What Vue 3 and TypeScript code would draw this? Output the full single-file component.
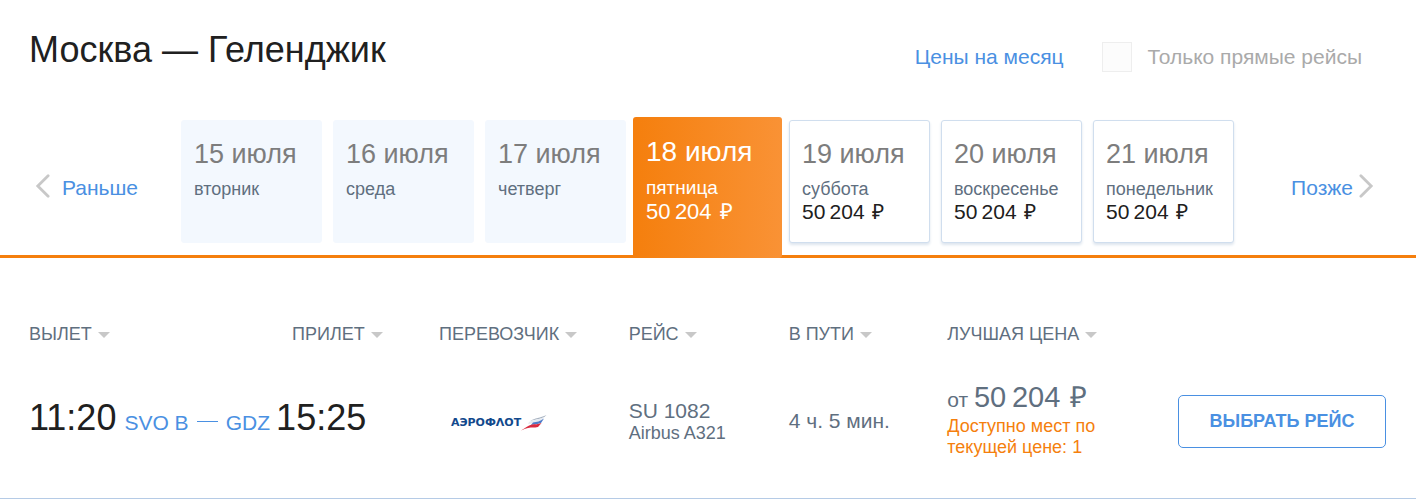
<script setup lang="ts">
import { ref } from 'vue'

interface Day {
  date: string
  weekday: string
  price?: string
}

const days: Day[] = [
  { date: '15 июля', weekday: 'вторник' },
  { date: '16 июля', weekday: 'среда' },
  { date: '17 июля', weekday: 'четверг' },
  { date: '18 июля', weekday: 'пятница', price: '50\u2009204' },
  { date: '19 июля', weekday: 'суббота', price: '50\u2009204' },
  { date: '20 июля', weekday: 'воскресенье', price: '50\u2009204' },
  { date: '21 июля', weekday: 'понедельник', price: '50\u2009204' },
]

const columns = [
  { key: 'departure', title: 'Вылет' },
  { key: 'arrival', title: 'Прилет' },
  { key: 'carrier', title: 'Перевозчик' },
  { key: 'flight', title: 'Рейс' },
  { key: 'duration', title: 'В пути' },
  { key: 'price', title: 'Лучшая цена' },
]

const selected = ref(3)
const directOnly = ref(false)
</script>

<template>
  <main class="page">
    <header class="header">
      <h1 class="title">Москва — Геленджик</h1>
      <div class="options">
        <a class="link" href="#month">Цены на месяц</a>
        <label class="direct" for="direct">
          <input id="direct" v-model="directOnly" type="checkbox" class="box" />
          Только прямые рейсы
        </label>
      </div>
    </header>

    <nav class="dates">
      <button type="button" class="step">
        <svg class="chevron" viewBox="0 0 16 26" aria-hidden="true"><path d="M14 2 3 13l11 11" /></svg>
        Раньше
      </button>
      <div class="strip">
        <button
          v-for="(day, i) in days"
          :key="day.date"
          type="button"
          class="day"
          :class="{ empty: !day.price, active: i === selected }"
          @click="selected = i"
        >
          <span class="date">{{ day.date }}</span>
          <span class="weekday">{{ day.weekday }}</span>
          <span v-if="day.price" class="day-price">{{ day.price }} <span class="rub">₽</span></span>
        </button>
      </div>
      <button type="button" class="step next">
        Позже
        <svg class="chevron" viewBox="0 0 16 26" aria-hidden="true"><path d="m2 2 11 11L2 24" /></svg>
      </button>
    </nav>

    <table class="flights">
      <thead>
        <tr>
          <th v-for="c in columns" :key="c.key" scope="col" :class="c.key">
            <button type="button" class="sort">{{ c.title }}<i class="caret"></i></button>
          </th>
          <td class="action"></td>
        </tr>
      </thead>
      <tbody>
        <tr>
          <td>
            <div class="route">
              <span class="time">11:20</span>
              <a class="airport" href="#svo">SVO B</a>
              <i class="dash"></i>
              <a class="airport" href="#gdz">GDZ</a>
            </div>
          </td>
          <td><div class="route"><span class="time">15:25</span></div></td>
          <td>
            <div class="airline">
              <span>АЭРОФΛОТ</span>
              <svg class="flag" viewBox="0 0 26 16" aria-hidden="true">
                <path fill="#a9b4c2" d="M9 6C14 3 19 3 25.500 0 23 3 19 4 15 4.500 13 5 11 5.500 9 6Z" />
                <path fill="#e6ebf2" d="M8 7c4-2 9-2 15-5l-2 4C16 8 11 8 7 9Z" />
                <path fill="#4d7bc8" d="M12 7.500c4-.5 7-1 11-4l-3 4.500c-4 1.500-6 1-10 2Z" />
                <path fill="#d92b3f" d="M0 15.500C4 13 7 10.500 11 9.500c3-.5 6 0 9.500-1.500L17 12c-4 1-6 0-10 1-3 .5-4 1.500-7 2.500Z" />
              </svg>
            </div>
          </td>
          <td>
            <div class="number">SU 1082</div>
            <div class="plane">Airbus A321</div>
          </td>
          <td class="duration-value">4 ч. 5 мин.</td>
          <td>
            <div class="best">от <span class="amount">50&#8201;204 <span class="rub">₽</span></span></div>
            <div class="seats">Доступно мест по текущей цене: 1</div>
          </td>
          <td class="action"><button type="button" class="choose">Выбрать рейс</button></td>
        </tr>
      </tbody>
    </table>
  </main>
</template>

<style>
body {
  margin: 0;
  background: #fff;
}
</style>

<style scoped>
.page {
  font-family: "Liberation Sans", Arial, sans-serif;
  color: #5f6f7f;
}
button {
  font: inherit;
  color: inherit;
  background: none;
  border: 0;
  padding: 0;
  cursor: pointer;
}
a {
  color: #4a90e2;
  text-decoration: none;
}
.header {
  display: flex;
  justify-content: space-between;
  padding: 28px 54px 0 29px;
}
.title {
  margin: 0;
  font-size: 36px;
  line-height: 44px;
  font-weight: 400;
  color: #202020;
}
.options {
  display: flex;
  align-items: center;
  gap: 38px;
  height: 30px;
  padding-top: 14px;
  font-size: 21px;
}
.direct {
  display: flex;
  align-items: center;
  gap: 16px;
  color: #aaa;
}
.box {
  appearance: none;
  width: 30px;
  height: 30px;
  margin: 0;
  border: 1px solid #eee;
  background: #fcfcfc;
}
.dates {
  display: flex;
  margin-top: 48px;
  padding: 0 30px 12px 29px;
  border-bottom: 3px solid #f57f0d;
}
.step {
  display: flex;
  align-items: center;
  gap: 12px;
  width: 152px;
  padding: 12px 0 0 6px;
  font-size: 21px;
  color: #4a90e2;
}
.next {
  justify-content: flex-end;
  gap: 6px;
  padding: 12px 12px 0 0;
}
.chevron {
  width: 15px;
  height: 26px;
  padding-bottom: 3px;
  fill: none;
  stroke: #c8c8c8;
  stroke-width: 3;
  stroke-linecap: round;
}
.strip {
  flex: 1;
  display: grid;
  grid-template-columns: repeat(7, minmax(0, 1fr));
  gap: 11px;
}
.day {
  display: flex;
  flex-direction: column;
  box-sizing: border-box;
  min-height: 123px;
  padding: 15px 12px;
  border: 1px solid #d0deee;
  border-radius: 3px;
  background: #fff;
  box-shadow: 0 2px 3px #dde5ee;
  text-align: left;
  white-space: nowrap;
}
.empty {
  border-color: #f3f8fe;
  background: #f3f8fe;
  box-shadow: none;
}
.date {
  font-size: 27px;
  line-height: 36px;
  color: #7d7d7d;
}
.weekday {
  margin-top: 6px;
  font-size: 18px;
  line-height: 22px;
}
.day-price {
  font-size: 21px;
  line-height: 24px;
  color: #202020;
}
.rub {
  margin-left: 2px;
  line-height: 1;
}
.active {
  margin: -3px -4px -15px;
  padding: 17px 13px;
  border: 0;
  background: linear-gradient(90deg, #f57f0d, #f99235);
  box-shadow: none;
  color: #fff;
}
.active .date {
  font-size: 28px;
}
.active .weekday {
  font-size: 19px;
  line-height: 24px;
}
.active .day-price {
  font-size: 22px;
}
.active .date,
.active .day-price {
  color: #fff;
}
.flights {
  table-layout: fixed;
  border-collapse: collapse;
  width: 100%;
  border-bottom: 1px solid #b5cbe6;
}
.flights th,
.flights td {
  box-sizing: border-box;
  padding: 0;
  text-align: left;
  font-weight: 400;
}
.flights thead th {
  height: 87px;
  vertical-align: bottom;
}
.flights tbody td {
  height: 153px;
  vertical-align: middle;
}
.flights .departure { width: 19.5%; }
.flights .arrival { width: 11.5%; }
.flights .carrier { width: 13.4%; }
.flights .flight { width: 11.3%; }
.flights .duration { width: 11.2%; }
.flights .price { width: 16.3%; }
.flights .arrival { padding-left: 16px; }
.flights .departure,
.flights tbody td:first-child { padding-left: 29px; }
.flights .action { padding-right: 30px; }
.sort {
  display: flex;
  align-items: center;
  gap: 6px;
  font-size: 18px;
  text-transform: uppercase;
}
.caret {
  border: 6px solid transparent;
  border-top-color: #c8c8c8;
  border-bottom: 0;
}
.route {
  display: flex;
  align-items: baseline;
  gap: 8px;
  padding-bottom: 6px;
  white-space: nowrap;
}
.time {
  font-size: 36px;
  color: #202020;
}
.airport {
  font-size: 21px;
}
.dash {
  width: 21px;
  height: 8px;
  border-top: 1px solid #4a90e2;
}
.airline {
  display: flex;
  align-items: center;
  padding: 3px 0 0 12px;
  font: bold 11px "DejaVu Sans", sans-serif;
  color: #12498c;
}
.flag {
  width: 26px;
  height: 16px;
}
.number,
.duration-value {
  font-size: 21px;
}
.plane,
.seats {
  font-size: 18px;
  line-height: 21px;
}
.best {
  font-size: 21px;
  line-height: 32px;
}
.amount {
  font-size: 29px;
}
.seats {
  max-width: 160px;
  padding-bottom: 3px;
  color: #f57f0d;
}
.choose {
  width: 100%;
  height: 53px;
  border: 1px solid #4a90e2;
  border-radius: 5px;
  font-size: 18px;
  font-weight: 700;
  text-transform: uppercase;
  color: #4a90e2;
}
</style>
